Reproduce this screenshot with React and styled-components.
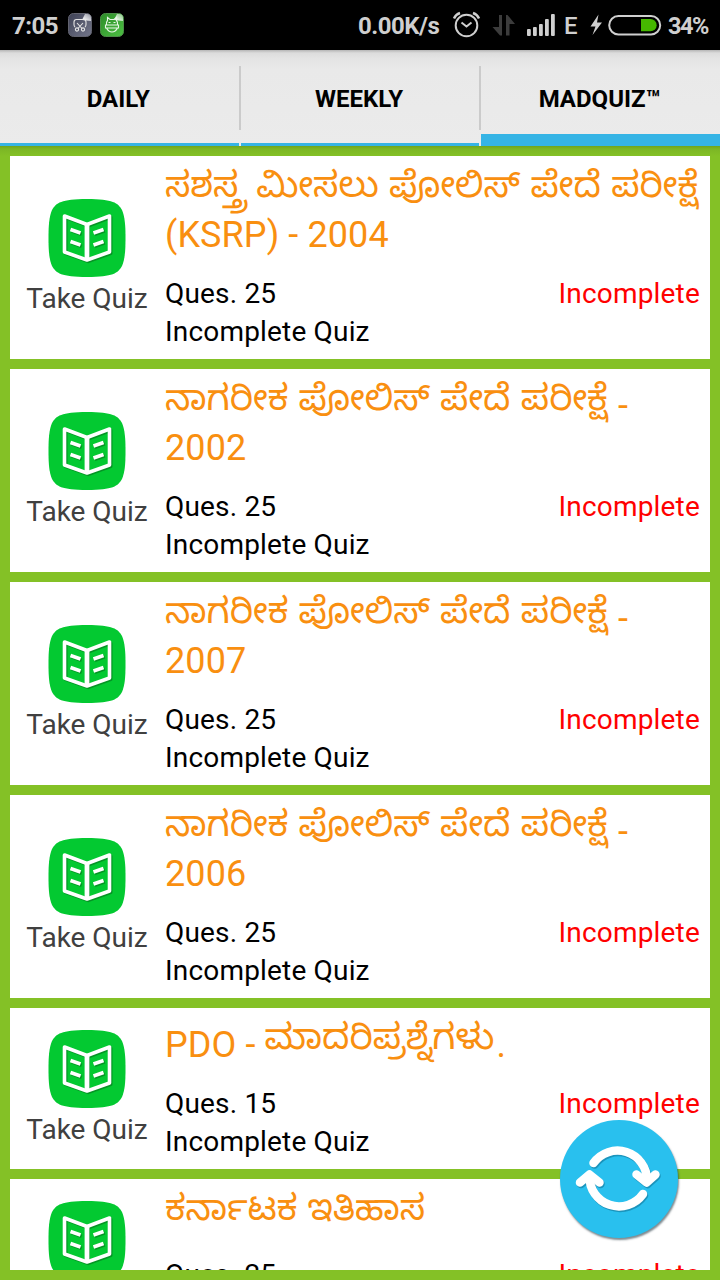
import { Fragment } from "react";
import styled, { createGlobalStyle } from "styled-components";

const tabs = ["DAILY", "WEEKLY", "MADQUIZ™"];

const quizzes = [
  {
    id: 1,
    lines: [
      [{ kn: "ಸಶಸ್ತ್ರ ಮೀಸಲು ಪೋಲಿಸ್ ಪೇದೆ ಪರೀಕ್ಷೆ", width: 535 }],
      [{ text: "(KSRP) - 2004" }],
    ],
    questions: 25,
  },
  {
    id: 2,
    lines: [
      [{ kn: "ನಾಗರೀಕ ಪೋಲಿಸ್ ಪೇದೆ ಪರೀಕ್ಷೆ", width: 444 }, { text: " -" }],
      [{ text: "2002" }],
    ],
    questions: 25,
  },
  {
    id: 3,
    lines: [
      [{ kn: "ನಾಗರೀಕ ಪೋಲಿಸ್ ಪೇದೆ ಪರೀಕ್ಷೆ", width: 444 }, { text: " -" }],
      [{ text: "2007" }],
    ],
    questions: 25,
  },
  {
    id: 4,
    lines: [
      [{ kn: "ನಾಗರೀಕ ಪೋಲಿಸ್ ಪೇದೆ ಪರೀಕ್ಷೆ", width: 444 }, { text: " -" }],
      [{ text: "2006" }],
    ],
    questions: 25,
  },
  {
    id: 5,
    lines: [[{ text: "PDO - " }, { kn: "ಮಾದರಿಪ್ರಶ್ನೆಗಳು", width: 232 }, { text: "." }]],
    questions: 15,
  },
  {
    id: 6,
    lines: [[{ kn: "ಕರ್ನಾಟಕ ಇತಿಹಾಸ", width: 260 }]],
    questions: 25,
  },
];

//-----------------------------//
//---------Status Bar----------//
//-----------------------------//
const StatusIcons = () => (
  <AppIcons viewBox="0 0 56 24">
    <defs>
      <linearGradient id="slate" x1="0" y1="0" x2="1" y2="1">
        <stop offset="0" stopColor="#3d4054" />
        <stop offset="1" stopColor="#74778b" />
      </linearGradient>
      <linearGradient id="leaf" x1="0" y1="0" x2="1" y2="1">
        <stop offset="0" stopColor="#2d8c29" />
        <stop offset="1" stopColor="#4dc043" />
      </linearGradient>
      <linearGradient id="shine" x1="0" y1="1" x2="1" y2="0">
        <stop offset="0.3" stopColor="#fff" stopOpacity="0.85" />
        <stop offset="1" stopColor="#fff" stopOpacity="0.35" />
      </linearGradient>
    </defs>
    <rect x="0.5" y="0.5" width="23" height="23" rx="5" fill="url(#slate)" stroke="#62636f" />
    <path d="M17 1h2q4 0 4 4v3l-9-1z" fill="url(#shine)" />
    <g fill="none" stroke="#e5e5e5" strokeWidth="1.1">
      <path d="M7 14q-1-1-1-2.500V9q0-2.500 2.500-2.500h7Q18 6.500 18 9v2.500q0 1.500-1 2.500M9 10l5 5.500M15 10l-5 5.500" />
      <circle cx="9" cy="16.500" r="1.600" />
      <circle cx="15" cy="16.500" r="1.600" />
    </g>
    <g transform="translate(32 0)">
      <rect x="0.500" y="0.500" width="23" height="23" rx="5" fill="url(#leaf)" stroke="#4c8f47" />
      <path d="M17 1h2q4 0 4 4v3l-9-1z" fill="url(#shine)" />
      <g fill="none" stroke="#e8f6e6" strokeWidth="1.100">
        <path d="M6.500 12q-0.500-3 1-4.500V4.500L10 6.500h4l2.500-2v3q1.500 1.500 1 4.500" />
        <path d="M5.500 12h13v3h-13zM6.500 15q2 4 5.500 4t5.500-4" />
        <path d="M8.500 9.500h2M13.500 9.500h2" />
      </g>
    </g>
  </AppIcons>
);

const StatusBar = () => (
  <Status>
    <Clock>7:05</Clock>
    <StatusIcons />
    <Speed>0.00K/s</Speed>
    <SystemIcons viewBox="450 0 106 50">
      <g fill="none" stroke="#cfcfcf" strokeWidth="2">
        <circle cx="466.500" cy="25.500" r="10.800" />
        <path d="M461.500 22.500l5 4 5-4" />
        <path d="M454 18.500q1.500-4 6-5.500M479 18.500q-1.500-4-6-5.500" strokeWidth="2.400" />
      </g>
      <path d="M499 15h3v20.500h-2L492.500 27h6.500zM506 35.500V15h1.500l7.500 9h-5.500v11.500z" fill="#3c3c3c" />
      <g fill="#cfcfcf">
        <rect x="527" y="29" width="3.800" height="7" rx="1" />
        <rect x="533" y="27" width="3.800" height="9" rx="1" />
        <rect x="539" y="24" width="3.800" height="12" rx="1" />
        <rect x="545" y="19" width="3.800" height="17" rx="1" />
        <rect x="551" y="14" width="3.800" height="22" rx="1" />
      </g>
    </SystemIcons>
    <Network>E</Network>
    <Battery viewBox="590 0 72 50">
      <path d="M598.500 14.500l-8 12h5l-3 8.500 9.500-12.500h-5z" fill="#cfcfcf" />
      <rect x="609.200" y="16" width="51" height="18.500" rx="9.200" fill="none" stroke="#cfcfcf" strokeWidth="2" />
      <path d="M641 19h9.500a6 6 0 0 1 0 12.300H641z" fill="#46b800" />
    </Battery>
    <Percent>34%</Percent>
  </Status>
);

//-----------------------------//
//----------Quiz Card----------//
//-----------------------------//
const BookIcon = () => (
  <Book viewBox="0 0 78 78">
    <path
      d="M39 0C65 0 70 4 74 11C77 18 77.500 27 77.500 39S77 60 74 67C70 74 65 78 39 78S8 74 4 67C1 60 0.500 51 0.500 39S1 18 4 11C8 4 13 0 39 0z"
      fill="#03c931"
    />
    <g fill="none" strokeWidth="3.600" strokeLinejoin="round">
      <g stroke="#07791f" opacity="0.650" transform="translate(1.200 1.400)">
        <path d="M16.500 17L39 25.500L61.500 17V53L39 61L16.500 53zM39 26V61" />
        <path d="M22.500 30.500l10 3.500M22.500 42.500l10 3.500M45.500 34l10-3.500M45.500 46l10-3.500" />
      </g>
      <g stroke="#fff">
        <path d="M16.500 17L39 25.500L61.500 17V53L39 61L16.500 53z" />
        <path d="M39 26V61" strokeWidth="4.800" />
        <path d="M22.500 30.500l10 3.500M22.500 42.500l10 3.500M45.500 34l10-3.500M45.500 46l10-3.500" />
      </g>
    </g>
  </Book>
);

const QuizCard = ({ quiz }) => (
  <Card>
    <TakeQuiz>
      <BookIcon />
      <TakeLabel>Take Quiz</TakeLabel>
    </TakeQuiz>
    <Details>
      <Title>
        {quiz.lines.map((line, i) => (
          <TitleLine key={i}>
            {line.map((part, j) =>
              part.kn ? (
                <Kannada key={j} $width={part.width}>
                  {part.kn}
                </Kannada>
              ) : (
                <span key={j}>{part.text}</span>
              )
            )}
          </TitleLine>
        ))}
      </Title>
      <InfoRow>
        <span>Ques. {quiz.questions}</span>
        <Result>Incomplete</Result>
      </InfoRow>
      <InfoRow>Incomplete Quiz</InfoRow>
    </Details>
  </Card>
);

const RefreshArrows = () => (
  <>
    <path d="M33.500 43A29.500 29.500 0 0 1 87 60" />
    <path d="M76.500 54.500L86.500 62.500L95.500 54.500" />
    <path d="M83 74A29.500 29.500 0 0 1 29.500 56" />
    <path d="M20 62.500L29.500 54.500L39.500 62.500" />
  </>
);

const App = () => {
  return (
    <Screen>
      <GlobalStyle />
      <StatusBar />
      <Tabs>
        {tabs.map((tab, i) => (
          <Fragment key={tab}>
            {i > 0 && <Divider />}
            <Tab $active={i === 2}>{tab}</Tab>
          </Fragment>
        ))}
      </Tabs>
      <ListFrame>
        <QuizList>
          {quizzes.map((quiz) => (
            <QuizCard key={quiz.id} quiz={quiz} />
          ))}
        </QuizList>
      </ListFrame>
      <RefreshButton aria-label="Refresh">
        <svg width="118" height="118" viewBox="0 0 118 118">
          <g fill="none" strokeLinecap="round" strokeLinejoin="round" strokeWidth="8.500">
            <g stroke="#13779b" opacity="0.600" transform="translate(1 1.500)">
              <RefreshArrows />
            </g>
            <g stroke="#fff">
              <RefreshArrows />
            </g>
          </g>
        </svg>
      </RefreshButton>
    </Screen>
  );
};

export default App;

const GlobalStyle = createGlobalStyle`
  * {
    box-sizing: border-box;
  }
  body {
    margin: 0;
    background: #84c126;
    font-family: Roboto, "Noto Sans", sans-serif;
  }
`;

const Screen = styled.div`
  position: relative;
  display: flex;
  flex-direction: column;
  width: 720px;
  height: 1280px;
  overflow: hidden;
  background: #84c126;
`;

const Status = styled.header`
  display: flex;
  align-items: center;
  height: 50px;
  flex-shrink: 0;
  padding-left: 12px;
  background: #000;
  color: #cfcfcf;
  font-size: 24px;
  font-weight: 700;
  line-height: 50px;
  white-space: nowrap;
`;

const Clock = styled.span`
  width: 56px;
  padding-top: 2px;
  letter-spacing: -0.5px;
`;

const AppIcons = styled.svg`
  width: 56px;
  height: 24px;
`;

const Speed = styled.span`
  width: 92px;
  margin-left: 234px;
  padding-top: 2px;
  letter-spacing: -0.5px;
`;

const SystemIcons = styled.svg`
  width: 106px;
  height: 50px;
`;

const Network = styled.span`
  width: 26px;
  margin-left: 8px;
  padding-top: 2px;
  font-weight: 500;
`;

const Battery = styled.svg`
  width: 72px;
  height: 50px;
`;

const Percent = styled.span`
  margin-left: 6px;
  padding-top: 2px;
  font-size: 23.5px;
  letter-spacing: -1.5px;
`;

const Tabs = styled.nav`
  display: flex;
  height: 96px;
  flex-shrink: 0;
  background: linear-gradient(#b5b5b5 0, #dcdcdc 3px, #e3e3e3 8px, #e9e9e9 20px, #ebebeb 100%);
`;

const Tab = styled.div`
  flex: 1;
  border-bottom: ${(props) => (props.$active ? "12px" : "3px")} solid #35b4e5;
  padding-right: 2px;
  color: #000;
  font-size: 24px;
  font-weight: 700;
  line-height: 98px;
  text-align: center;
`;

const Divider = styled.div`
  width: 2px;
  height: 64px;
  margin-top: 16px;
  background: #cbcbcb;
`;

const ListFrame = styled.main`
  flex: 1;
  min-height: 0;
  padding: 10px;
  background: linear-gradient(#6fa51c 0, #7cb625 3px, #84c126 10px);
`;

const QuizList = styled.div`
  display: flex;
  flex-direction: column;
  gap: 10px;
  height: 100%;
  overflow: hidden;
`;

const Card = styled.section`
  display: flex;
  flex-shrink: 0;
  background: #fff;
`;

const TakeQuiz = styled.div`
  display: flex;
  flex-direction: column;
  align-items: center;
  justify-content: center;
  width: 155px;
  padding-right: 1px;
`;

const Book = styled.svg`
  width: 78px;
  height: 78px;
`;

const TakeLabel = styled.span`
  margin-bottom: -1px;
  padding-top: 3px;
  color: #404040;
  font-size: 28px;
  line-height: 38px;
  white-space: nowrap;
`;

const Details = styled.div`
  flex: 1;
  padding: 16px 10px 8px 0;
`;

const Title = styled.div`
  margin-bottom: 19px;
  color: #f98f10;
  font-size: 36px;
`;

const TitleLine = styled.div`
  height: 42px;
  line-height: 42px;
  letter-spacing: 0.1px;
  white-space: pre;
`;

const Kannada = styled.span`
  display: inline-block;
  width: ${(props) => props.$width}px;
  font-family: "Noto Sans Kannada", "Noto Sans", sans-serif;
  font-size: 35.85px;
  letter-spacing: 0;
  line-height: 0;
  vertical-align: 8px;
`;

const InfoRow = styled.div`
  display: flex;
  justify-content: space-between;
  color: #000;
  font-size: 28px;
  line-height: 38px;
  letter-spacing: 0.18px;
`;

const Result = styled.span`
  color: #f00;
`;

const RefreshButton = styled.button`
  position: absolute;
  left: 560px;
  top: 1120px;
  width: 118px;
  height: 118px;
  padding: 0;
  border: none;
  border-radius: 50%;
  background: #29c0ee;
  box-shadow: 1px 2px 2px rgba(40, 60, 70, 0.6);
`;
